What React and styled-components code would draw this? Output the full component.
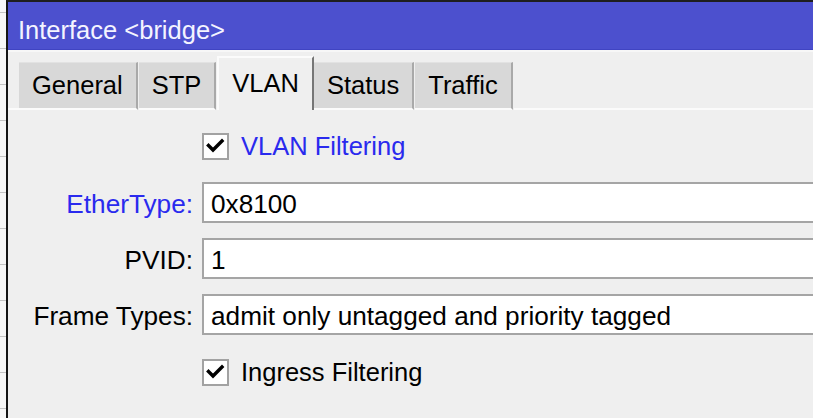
import React from "react";
import styled, { createGlobalStyle } from "styled-components";

const Global = createGlobalStyle`
  html, body {
    margin: 0;
    padding: 0;
    overflow: hidden;
    background: #efefef;
  }
  * { box-sizing: border-box; }
`;

const FONT = `"Liberation Sans", Arial, sans-serif`;

const Page = styled.div`
  display: flex;
  height: 418px;
  width: 813px;
  overflow: hidden;
  font-family: ${FONT};
  font-size: 25.5px;
`;

const BackStrip = styled.div`
  width: 6px;
  flex: none;
  background-color: #f7f7f7;
  background-image: repeating-linear-gradient(
    to bottom,
    transparent 0px,
    transparent 12px,
    #c4c4c4 12px,
    #c4c4c4 13px,
    transparent 13px,
    transparent 36px
  );
`;

const Window = styled.div`
  flex: 1;
  min-width: 0;
  display: flex;
  flex-direction: column;
  border-left: 2px solid #151515;
  border-top: 2px solid #1e1e1e;
  background: #efefef;
  overflow: hidden;
`;

const TitleBar = styled.div`
  height: 50px;
  flex: none;
  display: flex;
  align-items: center;
  padding: 8px 0 0 10px;
  background: #4c50ce;
  border-bottom: 2px solid #f7f7f7;
  box-shadow: inset 0 -1px 0 #4044c2;
  color: #f4f4ff;
  white-space: nowrap;
`;

const TabStrip = styled.div`
  display: flex;
  align-items: flex-end;
  padding-top: 4px;
  background: #efefef;
`;

const StripEdge = styled.div`
  width: ${(p) => (p.$grow ? "auto" : "11px")};
  flex: ${(p) => (p.$grow ? "1" : "none")};
  border-bottom: 2px solid #fbfbfb;
`;

const Tab = styled.div`
  display: flex;
  align-items: center;
  white-space: nowrap;
  color: #000;
  ${(p) =>
    p.$active
      ? `
    height: 54px;
    padding: 0 13px 2px 13px;
    background: #efefef;
    border-top: 2px solid #fbfbfb;
    border-left: 2px solid #fbfbfb;
    border-right: 2px solid #767676;
  `
      : `
    height: 48px;
    padding: 0 13px;
    margin-right: 1px;
    background: #d8d8d8;
    border-top: 1px solid #e2e2e2;
    border-right: 2px solid #a9a9a9;
    border-bottom: 2px solid #fbfbfb;
  `}
`;

const Form = styled.div`
  display: grid;
  grid-template-columns: 185px 1fr;
  column-gap: 9px;
  row-gap: 15px;
  padding-top: 22px;
  align-items: center;
  font-size: 26.2px;
`;

const Label = styled.div`
  text-align: right;
  white-space: nowrap;
  padding-top: 3px;
  color: ${(p) => (p.$blue ? "#2a2aee" : "#000")};
`;

const Field = styled.div`
  height: 41px;
  margin-right: -8px;
  display: flex;
  align-items: center;
  padding: 3px 0 0 7px;
  background: #fff;
  border: 2px solid #a5a5a5;
  white-space: nowrap;
  color: #000;
`;

const CheckRow = styled.div`
  grid-column: 2;
  height: 28px;
  display: flex;
  align-items: center;
  gap: 12px;
  font-size: 25.5px;
  line-height: 28px;
  margin: ${(p) => (p.$last ? "8px 0 0 0" : "0 0 7px 0")};
  color: ${(p) => (p.$blue ? "#2a2aee" : "#000")};
  white-space: nowrap;
`;

const Box = styled.div`
  width: 27px;
  height: 27px;
  flex: none;
  background: #fff;
  border: 2px solid #a2a2a2;
  display: flex;
  align-items: center;
  justify-content: center;
`;

const Check = () => (
  <svg width="23" height="23" viewBox="0 0 23 23">
    <polyline
      points="4.5,10.5 9,15 18,6"
      fill="none"
      stroke="#000"
      strokeWidth="3.4"
      strokeLinecap="square"
      strokeLinejoin="miter"
    />
  </svg>
);

const CheckBox = ({ label, blue, last }) => (
  <CheckRow $blue={blue} $last={last}>
    <Box>
      <Check />
    </Box>
    <span>{label}</span>
  </CheckRow>
);

const tabs = ["General", "STP", "VLAN", "Status", "Traffic"];

export default function App() {
  return (
    <>
      <Global />
      <Page>
        <BackStrip />
        <Window>
          <TitleBar>Interface &lt;bridge&gt;</TitleBar>
          <TabStrip>
            <StripEdge />
            {tabs.map((t) => (
              <Tab key={t} $active={t === "VLAN"}>
                {t}
              </Tab>
            ))}
            <StripEdge $grow />
          </TabStrip>
          <Form>
            <CheckBox label="VLAN Filtering" blue />
            <Label $blue>EtherType:</Label>
            <Field>0x8100</Field>
            <Label>PVID:</Label>
            <Field>1</Field>
            <Label>Frame Types:</Label>
            <Field>admit only untagged and priority tagged</Field>
            <CheckBox label="Ingress Filtering" last />
          </Form>
        </Window>
      </Page>
    </>
  );
}
